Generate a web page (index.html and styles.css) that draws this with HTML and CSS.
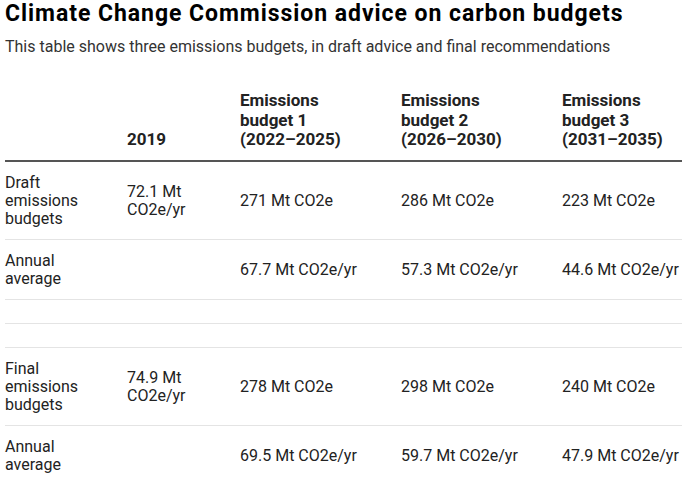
FILE: index.html
```html
<!DOCTYPE html>
<html lang="en">
<head>
<meta charset="utf-8">
<title>Climate Change Commission advice on carbon budgets</title>
<link rel="stylesheet" href="styles.css">
</head>
<body>
<div class="chart">
  <h1 class="title">Climate Change Commission advice on carbon budgets</h1>
  <p class="subtitle">This table shows three emissions budgets, in draft advice and final recommendations</p>
  <table class="budgets">
    <colgroup>
      <col class="c1"><col class="c2"><col class="c3"><col class="c4"><col class="c5">
    </colgroup>
    <thead>
      <tr>
        <th></th>
        <th>2019</th>
        <th>Emissions<br>budget 1<br>(2022–2025)</th>
        <th>Emissions<br>budget 2<br>(2026–2030)</th>
        <th>Emissions<br>budget 3<br>(2031–2035)</th>
      </tr>
    </thead>
    <tbody>
      <tr>
        <td>Draft<br>emissions<br>budgets</td>
        <td>72.1 Mt<br>CO2e/yr</td>
        <td>271 Mt CO2e</td>
        <td>286 Mt CO2e</td>
        <td>223 Mt CO2e</td>
      </tr>
      <tr>
        <td>Annual<br>average</td>
        <td></td>
        <td>67.7 Mt CO2e/yr</td>
        <td>57.3 Mt CO2e/yr</td>
        <td>44.6 Mt CO2e/yr</td>
      </tr>
      <tr class="empty"><td></td><td></td><td></td><td></td><td></td></tr>
      <tr class="empty"><td></td><td></td><td></td><td></td><td></td></tr>
      <tr>
        <td>Final<br>emissions<br>budgets</td>
        <td>74.9 Mt<br>CO2e/yr</td>
        <td>278 Mt CO2e</td>
        <td>298 Mt CO2e</td>
        <td>240 Mt CO2e</td>
      </tr>
      <tr>
        <td>Annual<br>average</td>
        <td></td>
        <td>69.5 Mt CO2e/yr</td>
        <td>59.7 Mt CO2e/yr</td>
        <td>47.9 Mt CO2e/yr</td>
      </tr>
    </tbody>
  </table>
</div>
</body>
</html>
```
FILE: styles.css
```css
html, body {
  margin: 0;
  padding: 0;
  background: #fff;
}
body {
  font-family: Roboto, "Liberation Sans", sans-serif;
  color: #222;
  overflow: hidden;
}
.chart {
  padding: 0 0 0 5px;
}
.title {
  margin: 0;
  font-size: 23px;
  line-height: 27px;
  letter-spacing: 0.95px;
  font-weight: 700;
  color: #000;
}
.subtitle {
  margin: 10px 0 0;
  font-size: 16px;
  line-height: 20px;
  color: #333;
}
.budgets {
  margin-top: 22px;
  border-collapse: collapse;
  table-layout: fixed;
  width: 677px;
  font-size: 16px;
  line-height: 18px;
  color: #222;
}
.c1 { width: 103px; }
.c2 { width: 113px; }
.c3 { width: 161px; }
.c4 { width: 161px; }
.c5 { width: 139px; }
.budgets th {
  font-weight: 700;
  font-size: 17px;
  line-height: 19.5px;
  text-align: left;
  vertical-align: bottom;
  padding: 12px 0 10px 19px;
  border-bottom: 2px solid #555;
  color: #222;
}
.budgets td {
  padding: 12px 0 11px 19px;
  vertical-align: middle;
  border-bottom: 1px solid #e4e4e4;
  white-space: nowrap;
}
.budgets th:first-child,
.budgets td:first-child {
  padding-left: 0;
}
```
